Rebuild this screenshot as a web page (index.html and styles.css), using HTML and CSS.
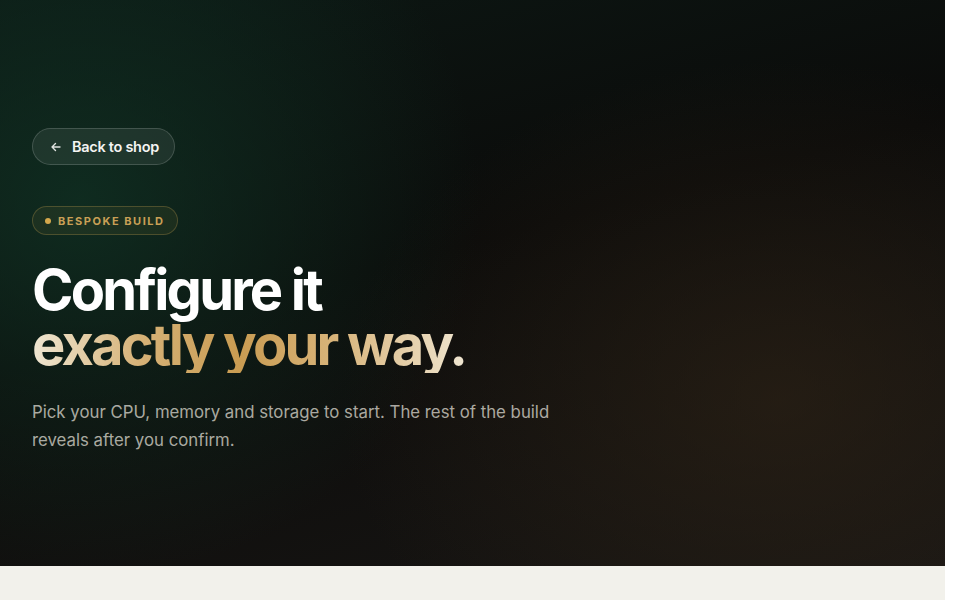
FILE: index.html
```html
<!DOCTYPE html>
<html>
<head>
<meta charset="utf-8">
<link rel="stylesheet" href="styles.css">
</head>
<body>
<div class="page">
  <section class="hero">
    <a class="back" href="#">
      <svg width="12" height="12" viewBox="0 0 12 12" fill="none" stroke="currentColor" stroke-width="1.4" stroke-linecap="round" stroke-linejoin="round"><path d="M10 6H2M5.5 2.5L2 6l3.5 3.5"/></svg>
      <span>Back to shop</span>
    </a>
    <div class="badge"><span class="dot"></span>BESPOKE BUILD</div>
    <h1 class="title"><span class="line">Configure it</span><span class="line grad">exactly your way.</span></h1>
    <p class="lead">Pick your CPU, memory and storage to start. The rest of the build reveals after you confirm.</p>
  </section>
  <section class="below"></section>
</div>
</body>
</html>
```
FILE: styles.css
```css
html, body { margin: 0; padding: 0; background: #fff; }
body { font-family: Inter, "Noto Sans", sans-serif; }
.page { width: 945px; }
.hero {
  height: 566px;
  box-sizing: border-box;
  padding: 128px 32px 0;
  display: flex;
  flex-direction: column;
  align-items: flex-start;
  background:
    radial-gradient(ellipse 400px 380px at 80px 200px, rgba(16,50,36,0.8), rgba(16,50,36,0) 100%),
    radial-gradient(ellipse 440px 340px at 780px 400px, rgba(48,36,22,0.6), rgba(48,36,22,0) 100%),
    linear-gradient(165deg, #0c1814 0%, #0b0b0a 45%, #181614 100%);
}
.back {
  display: flex;
  align-items: center;
  gap: 10px;
  height: 37px;
  box-sizing: border-box;
  padding: 0 15px 0 17px;
  border-radius: 999px;
  border: 1px solid rgba(255,255,255,0.16);
  background: rgba(255,255,255,0.07);
  color: #f4f4f2;
  text-decoration: none;
  font-size: 14.5px;
  font-weight: 600;
  letter-spacing: -0.02em;
}
.back svg { color: #dfe3e0; }
.badge {
  margin-top: 41px;
  display: flex;
  align-items: center;
  gap: 7px;
  height: 29px;
  box-sizing: border-box;
  padding: 0 12px 0 12px;
  border-radius: 999px;
  border: 1px solid rgba(201,160,80,0.28);
  background: rgba(201,160,80,0.08);
  color: #c9a056;
  font-size: 11px;
  font-weight: 700;
  letter-spacing: 0.14em;
}
.dot { width: 6px; height: 6px; border-radius: 50%; background: #d4a84c; }
.title {
  margin: 28px 0 0;
  display: flex;
  flex-direction: column;
  font-size: 56px;
  line-height: 55px;
  font-weight: 700;
  letter-spacing: -0.05em;
  color: #fff;
}
.line { display: block; }
.grad {
  align-self: flex-start;
  background: linear-gradient(90deg, #efe6d2 0%, #d6b277 25%, #c99c52 48%, #d8b47a 70%, #efe5d0 100%);
  -webkit-background-clip: text;
  background-clip: text;
  color: transparent;
}
.lead {
  margin: 25px 0 0;
  max-width: 540px;
  font-size: 16.8px;
  line-height: 28px;
  color: rgba(232,228,220,0.72);
}
.below { height: 34px; background: #f2f1eb; }
```
